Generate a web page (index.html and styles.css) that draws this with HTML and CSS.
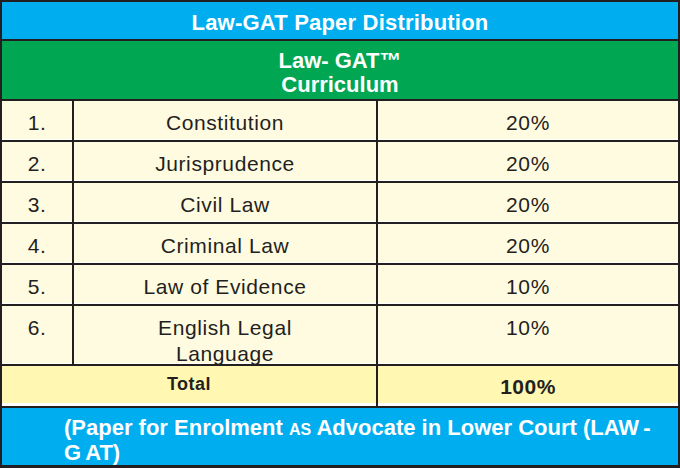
FILE: index.html
```html
<!DOCTYPE html>
<html>
<head>
<meta charset="utf-8">
<link rel="stylesheet" href="styles.css">
</head>
<body>
<div class="sheet">
  <div class="title">Law-GAT Paper Distribution</div>
  <div class="sub">Law- GAT™<br>Curriculum</div>
  <div class="row"><div class="c num">1.</div><div class="c subj">Constitution</div><div class="c pct">20%</div></div>
  <div class="row"><div class="c num">2.</div><div class="c subj">Jurisprudence</div><div class="c pct">20%</div></div>
  <div class="row"><div class="c num">3.</div><div class="c subj">Civil Law</div><div class="c pct">20%</div></div>
  <div class="row"><div class="c num">4.</div><div class="c subj">Criminal Law</div><div class="c pct">20%</div></div>
  <div class="row"><div class="c num">5.</div><div class="c subj">Law of Evidence</div><div class="c pct">10%</div></div>
  <div class="row tall"><div class="c num">6.</div><div class="c subj">English Legal<br>Language</div><div class="c pct">10%</div></div>
  <div class="row total"><div class="c tlabel">Total</div><div class="c tval">100%</div></div>
  <div class="foot">
    <div class="fline">(Paper for Enrolment <span class="sc">AS</span> Advocate in Lower Court (LAW<span class="gap">-</span></div>
    <div class="fline">G<span class="gap">AT)</span></div>
  </div>
</div>
</body>
</html>
```
FILE: styles.css
```css
html, body {
  margin: 0;
  padding: 0;
  background: #ffffff;
}
.sheet {
  width: 680px;
  height: 468px;
  box-sizing: border-box;
  border: 2px solid #231f20;
  border-bottom-width: 3px;
  display: flex;
  flex-direction: column;
  font-family: "Liberation Sans", Arial, sans-serif;
  color: #231f20;
  background: #231f20;
}
.title {
  flex: none;
  height: 39px;
  box-sizing: border-box;
  background: #00aeef;
  color: #ffffff;
  font-weight: bold;
  font-size: 22px;
  letter-spacing: 0.2px;
  line-height: 37px;
  padding-top: 2px;
  text-align: center;
  border-bottom: 2px solid #231f20;
}
.sub {
  flex: none;
  height: 60px;
  box-sizing: border-box;
  background: #00a651;
  color: #ffffff;
  font-weight: bold;
  font-size: 22px;
  line-height: 24px;
  padding-top: 8px;
  text-align: center;
  border-bottom: 2px solid #231f20;
}
.row {
  flex: none;
  display: grid;
  grid-template-columns: 70px 302px 300px;
  column-gap: 2px;
  height: 41px;
  box-sizing: border-box;
  border-bottom: 2px solid #231f20;
  background: #231f20;
}
.row.tall {
  height: 60px;
}
.c {
  background: #fffbe1;
  box-shadow: inset 0 -1px 0 #ffffff;
  font-size: 21px;
  letter-spacing: 0.6px;
  line-height: 26px;
  padding-top: 9px;
  text-align: center;
  overflow: hidden;
}
.row.total {
  grid-template-columns: 374px 300px;
  height: 42px;
}
.total .c {
  background: #fff7b2;
  box-shadow: inset 0 -3px 0 #ffffff;
  font-weight: bold;
}
.total .tlabel {
  font-size: 18px;
  letter-spacing: 0.5px;
  padding-top: 5px;
}
.total .tval {
  font-size: 21px;
  letter-spacing: 0.5px;
  padding-top: 8px;
}
.foot {
  flex: 1;
  background: #00aeef;
  color: #ffffff;
  font-weight: bold;
  font-size: 22px;
  line-height: 23px;
  padding: 8px 0 0 62px;
  box-sizing: border-box;
}
.fline {
  white-space: nowrap;
}
.sc {
  font-size: 16px;
}
.gap {
  margin-left: 4px;
}
```
